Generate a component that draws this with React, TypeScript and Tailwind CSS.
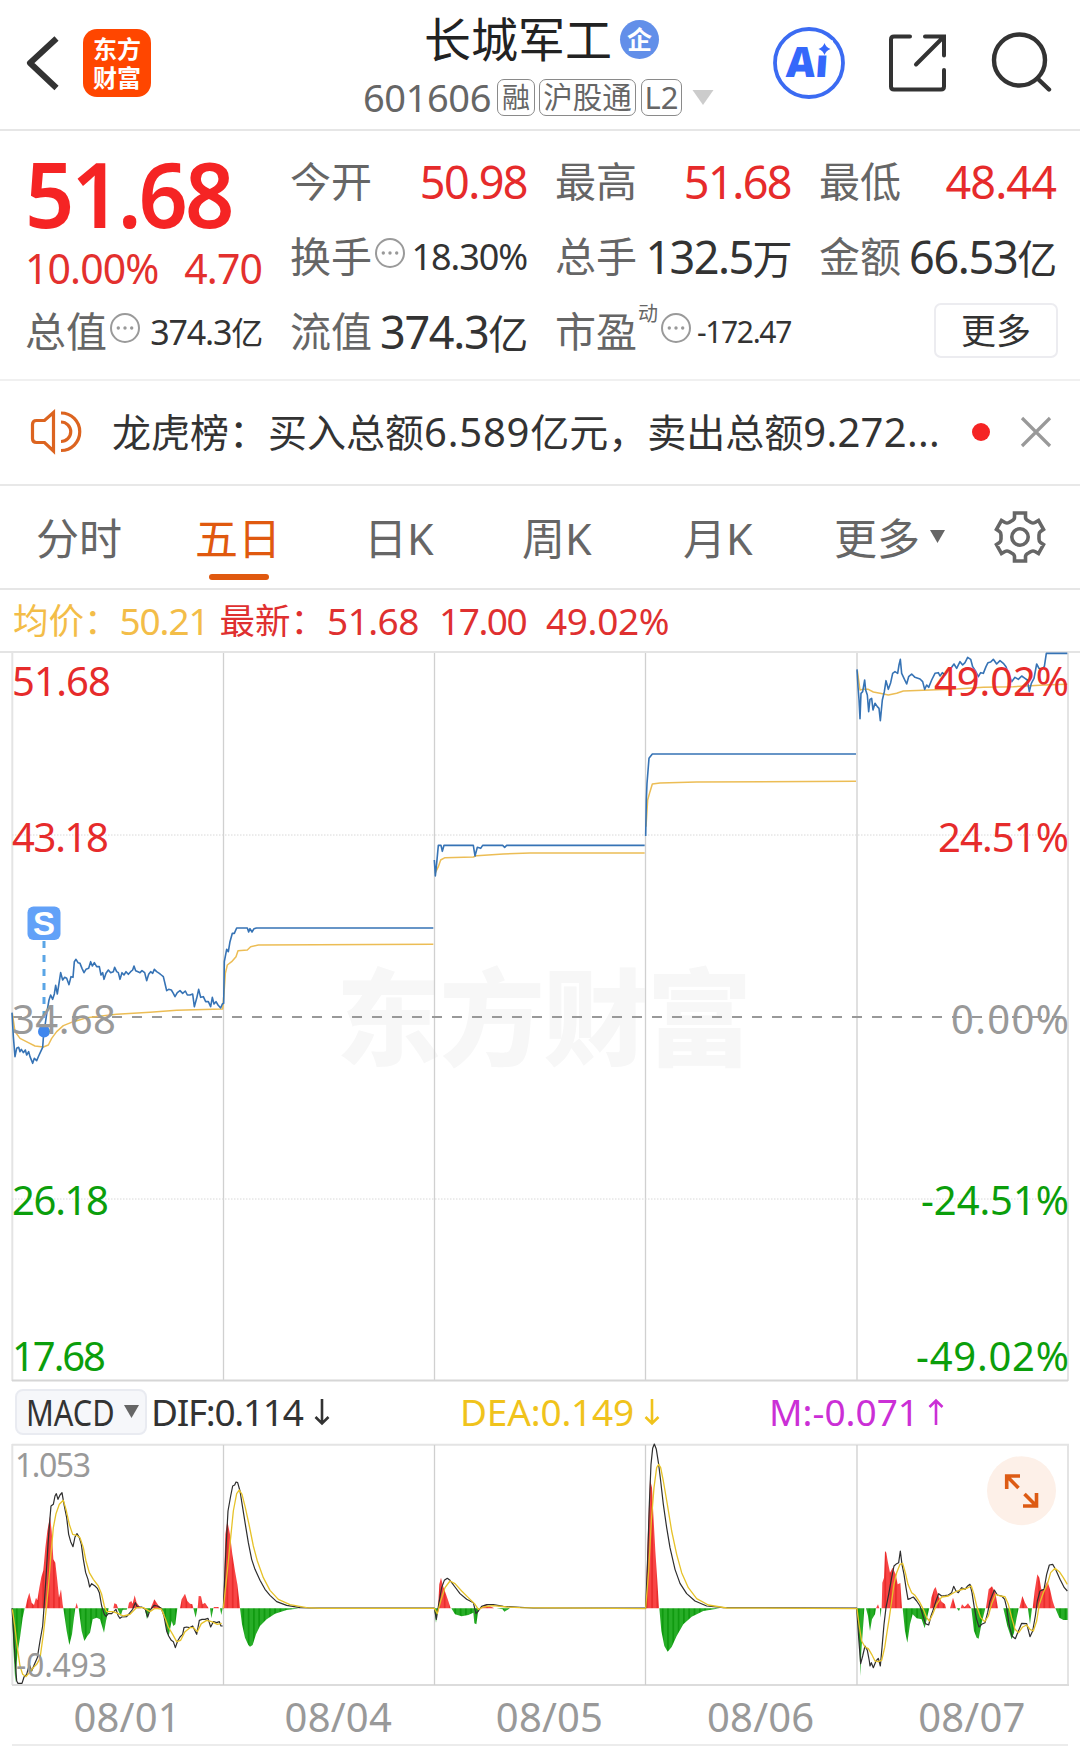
import React from "react";

const FONT = "font-['Noto_Sans','Noto_Sans_CJK_SC',sans-serif]";

type Series = { x: number; y: number; pts: string };

const PRICE: Series[] = [
  {
    x: 0,
    y: 640,
    pts: "36,1118 40,1190 45,1250 50,1225 56,1222 60,1235 64,1228 70,1238 76,1230 80,1245 86,1235 90,1250 95,1262 98,1270 103,1255 110,1262 116,1248 122,1235 128,1222 131,1180 136,1150 141,1115 147,1080 152,1065 158,1078 163,1062 167,1036 172,1062 177,1030 182,998 188,1020 194,1012 200,1015 207,1034 213,1010 219,1012 223,965 228,958 234,968 240,970 246,985 252,998 258,988 266,985 272,965 277,978 283,968 290,980 298,980 303,1005 308,998 312,1018 318,1000 325,990 332,998 340,995 344,982 350,995 355,998 360,1018 366,998 372,1005 378,995 385,1003 392,995 398,990 402,978 407,992 414,995 420,998 426,992 434,998 440,1022 446,1003 452,995 458,1000 463,988 470,995 478,1000 484,1005 490,1010 496,1035 500,1052 506,1048 514,1050 520,1060 525,1070 532,1058 540,1052 548,1060 556,1053 562,1065 570,1065 578,1062 583,1100 590,1075 596,1048 602,1072 610,1070 617,1085 625,1085 632,1100 637,1072 642,1092 648,1085 654,1095 662,1104 667,1092 671,1090 673,965 680,928 685,935 690,905 697,880 703,880 710,864 742,864 746,876 750,866 756,876 762,866 770,864 1300,864",
  },
  {
    x: 420,
    y: 640,
    pts: "43,660 46,708 50,670 55,616 63,616 67,634 72,616 160,616 165,648 172,622 182,625 188,616 248,616 254,622 260,616 674,616",
  },
  { x: 630, y: 640, pts: "47,588 49,480 51,430 57,355 67,342 678,342" },
  {
    x: 630,
    y: 640,
    pts: "681,88 684,140 687,178 690,236 693,160 698,155 704,120 707,150 712,165 716,215 720,178 725,175 729,210 735,190 742,200 747,205 751,242 757,180 763,155 768,122 775,148 782,128 788,100 795,95 803,100 807,75 811,58 815,100 822,115 830,132 836,110 845,102 855,112 870,117 878,125 884,148 890,135 896,142 905,120 915,100 925,98 930,108 937,98 945,105 955,90 965,82 972,72 980,85 990,65 998,75 1005,68 1013,52 1022,58 1028,80 1036,92 1045,110 1052,98 1060,100 1068,80 1074,68 1082,66 1090,58 1100,72 1110,62 1120,70 1128,80 1135,100 1145,125 1155,112 1165,118 1175,108 1185,115 1192,120 1198,155 1204,130 1212,115 1220,72 1227,85 1235,88 1243,80 1249,40 1312,40",
  },
];

const AVERAGE: Series[] = [
  {
    x: 0,
    y: 640,
    pts: "37,1120 45,1175 60,1195 85,1208 105,1218 130,1221 145,1215 155,1195 170,1175 190,1157 220,1145 260,1133 350,1123 450,1117 530,1111 668,1107 672,1060 676,1000 682,975 695,965 708,950 714,932 742,930 752,920 775,915 1300,913",
  },
  { x: 420, y: 640, pts: "45,700 55,680 62,660 75,653 160,651 170,647 250,642 330,639 674,639" },
  { x: 630, y: 640, pts: "48,560 53,480 60,455 67,432 90,429 200,426 678,424" },
  {
    x: 630,
    y: 640,
    pts: "682,92 690,150 700,148 715,148 730,156 750,160 775,165 800,160 820,153 900,150 980,147 1060,142 1150,140 1230,136 1260,134 1312,133",
  },
];

const RISE: Series[] = [
  {
    x: 0,
    y: 1370,
    pts: "76,712 82,685 88,665 95,695 102,702 108,680 112,688 118,650 124,618 130,598 136,530 142,480 150,436 155,480 160,565 166,575 172,630 177,680 183,655 188,700 190,712 226,712 230,695 234,712 340,712 343,697 350,700 354,712 384,712 387,695 394,690 398,698 404,673 410,695 418,706 424,712 452,712 463,685 475,703 484,712 540,712 545,685 555,668 562,690 570,698 577,700 580,712 593,712 596,675 603,676 608,700 615,695 626,712 640,712 642,708 655,708 657,712",
  },
  {
    x: 200,
    y: 1370,
    pts: "70,712 76,490 82,450 90,490 97,550 105,600 112,640 118,690 120,712 714,712 718,640 723,620 730,648 738,670 745,690 752,712 842,712 855,701 880,710 882,712",
  },
  {
    x: 630,
    y: 1370,
    pts: "47,712 54,480 60,325 66,350 70,430 76,540 82,630 87,712 738,712 744,700 748,712 755,712 757,635 762,620 765,540 769,545 773,570 780,605 788,590 797,610 803,640 811,636 816,712 900,712 904,680 912,655 917,648 925,675 935,692 945,700 948,712 960,712 969,680 978,712 992,712 996,700 1004,708 1014,697 1024,712 1068,712 1076,655 1086,646 1096,665 1104,712 1168,712 1177,675 1185,695 1194,712 1208,712 1214,660 1222,610 1228,620 1234,655 1242,655 1252,630 1260,655 1268,690 1275,712",
  },
];

const FALL: Series[] = [
  {
    x: 0,
    y: 1370,
    pts: "36,712 40,830 46,935 52,850 60,800 68,740 74,712 190,712 200,780 208,822 216,790 222,740 226,712 236,712 245,780 253,810 262,795 270,785 278,745 290,740 300,745 306,765 312,785 318,750 326,712 352,712 362,735 368,716 380,716 382,712 434,712 441,745 448,720 452,712 484,712 492,725 500,780 506,795 515,750 520,765 526,760 532,712 580,712 587,740 592,712 630,712 634,742 640,712 660,712 664,732 668,712",
  },
  {
    x: 200,
    y: 1370,
    pts: "120,712 126,760 135,800 145,822 150,827 158,822 168,790 180,765 200,745 225,728 260,717 300,712 703,712 708,755 714,712 754,712 765,730 785,736 805,732 820,725 823,757 829,760 834,725 838,712 890,712 908,715 913,722 930,712",
  },
  {
    x: 630,
    y: 1370,
    pts: "88,712 94,780 103,825 113,842 125,828 140,795 160,760 185,737 220,720 270,712 681,712 685,780 689,840 691,915 694,840 697,800 703,712 708,712 714,735 720,780 726,745 735,730 738,712 750,712 752,740 754,712 818,712 825,780 832,815 840,760 848,730 860,742 875,745 884,772 890,745 898,712 980,712 987,720 990,712 1024,712 1032,780 1040,800 1046,803 1054,760 1066,712 1120,712 1132,765 1145,805 1152,785 1160,740 1166,712 1194,712 1200,760 1206,712 1276,712 1288,740 1300,747 1313,747 1313,712",
  },
];

const DIF: Series[] = [
  {
    x: 0,
    y: 1370,
    pts: "36,712 44,840 50,930 54,937 66,937 72,918 80,910 88,880 95,900 104,878 112,860 120,810 128,765 132,710 138,620 144,520 150,440 153,405 160,400 165,375 169,368 174,385 180,372 186,365 192,400 200,440 206,490 212,512 219,527 225,498 231,488 238,500 244,520 250,565 257,605 264,625 269,648 275,638 285,645 292,652 298,665 305,705 313,730 318,736 325,728 335,728 348,715 355,735 360,742 365,738 380,737 390,725 398,715 406,695 412,708 425,708 436,715 443,738 450,718 462,703 472,705 484,712 492,735 500,780 506,795 514,808 520,812 526,830 533,810 540,798 548,790 552,770 560,768 568,770 578,765 590,790 598,748 606,745 615,745 624,742 632,768 640,752 650,755 658,752 663,765 668,765",
  },
  {
    x: 200,
    y: 1370,
    pts: "70,712 78,530 84,420 92,375 98,345 104,342 108,333 113,335 120,360 128,410 136,460 145,515 155,565 165,595 180,628 195,655 210,673 230,692 260,703 300,710 330,711 703,711 709,745 716,700 725,650 733,628 742,622 750,628 765,648 780,668 800,685 820,695 828,728 835,720 845,706 860,701 880,701 910,706 960,709 1000,711 1337,711",
  },
  {
    x: 630,
    y: 1370,
    pts: "47,712 53,560 58,400 63,280 68,232 73,219 79,235 86,280 92,330 100,400 110,470 120,530 135,595 150,637 170,668 195,690 230,705 280,710 680,711 686,800 692,878 698,855 705,825 712,838 718,870 720,885 724,875 730,890 738,870 745,862 751,885 756,830 762,760 768,710 776,670 785,620 792,585 800,578 806,575 811,540 816,580 822,610 828,650 834,685 842,682 850,678 860,690 870,705 878,730 886,758 896,762 903,735 910,715 918,690 926,668 935,675 945,674 955,672 965,665 971,646 978,660 985,665 995,650 1005,655 1013,645 1020,640 1026,665 1033,710 1040,745 1047,768 1055,760 1065,755 1073,725 1080,690 1093,657 1102,672 1115,675 1124,685 1130,710 1138,765 1146,795 1156,803 1163,785 1175,757 1190,758 1200,797 1208,780 1216,735 1222,690 1230,660 1242,655 1250,610 1258,582 1268,580 1278,598 1290,625 1303,650 1312,660",
  },
];

const DEA: Series[] = [
  {
    x: 0,
    y: 1370,
    pts: "37,715 45,770 52,830 60,885 68,910 78,917 88,905 100,890 110,880 120,862 130,790 138,720 145,650 152,560 160,470 168,428 178,400 190,388 198,415 208,460 218,490 230,493 240,500 250,530 258,570 268,605 280,625 295,645 305,670 313,705 320,722 340,722 355,728 370,735 390,730 410,710 430,710 450,722 465,712 484,714 495,740 505,768 518,790 530,812 542,808 555,782 570,770 580,770 592,782 604,758 620,748 635,752 652,760 665,757",
  },
  {
    x: 200,
    y: 1370,
    pts: "70,712 82,600 90,520 100,420 110,368 118,357 126,370 136,410 148,465 160,525 172,570 190,620 210,658 235,685 270,701 320,710 360,712 703,712 712,728 722,690 735,650 750,630 765,638 785,660 805,680 825,700 835,715 850,708 880,704 920,708 960,710 1337,713",
  },
  {
    x: 630,
    y: 1370,
    pts: "47,712 56,600 64,450 72,350 80,290 86,280 92,290 100,330 112,400 125,480 140,550 155,605 175,650 200,683 235,702 290,711 681,713 687,760 695,810 705,828 715,833 725,850 735,870 745,872 755,868 764,830 770,790 778,740 785,690 792,640 800,605 810,580 818,577 826,605 834,640 845,665 855,673 868,692 880,715 890,740 898,750 908,730 920,700 935,678 955,675 975,663 990,657 1010,652 1024,645 1032,670 1040,705 1052,740 1064,752 1075,735 1086,695 1097,670 1110,675 1125,677 1135,700 1145,740 1155,775 1166,785 1178,768 1190,762 1200,775 1210,780 1220,750 1228,700 1240,665 1252,640 1262,605 1275,592 1288,602 1300,620 1312,640",
  },
];

function Lines({ data, color, width }: { data: Series[]; color: string; width: number }) {
  return (
    <>
      {data.map((s, i) => (
        <polyline
          key={i}
          transform={`translate(${s.x} ${s.y}) scale(0.33333)`}
          points={s.pts}
          fill="none"
          stroke={color}
          strokeWidth={width * 3}
          strokeLinejoin="round"
        />
      ))}
    </>
  );
}

function Areas({ data, fill }: { data: Series[]; fill: string }) {
  return (
    <>
      {data.map((s, i) => (
        <polygon key={i} transform={`translate(${s.x} ${s.y}) scale(0.33333)`} points={s.pts} fill={fill} />
      ))}
    </>
  );
}

function AxisLabel({
  x,
  cy,
  w,
  fill,
  end,
  size = 40,
  children,
}: {
  x: number;
  cy: number;
  w: number;
  fill: string;
  end?: boolean;
  size?: number;
  children: string;
}) {
  return (
    <text
      x={end ? x - w : x}
      y={cy + size * 0.357}
      fontSize={size}
      fill={fill}
      textLength={w}
      lengthAdjust="spacing"
    >
      {children}
    </text>
  );
}

function Hint() {
  return (
    <svg className="h-[32px] w-[32px] shrink-0" viewBox="0 0 32 32">
      <circle cx="16" cy="16" r="14" fill="none" stroke="#9a9a9a" strokeWidth="2" />
      <circle cx="9.3" cy="16" r="1.7" fill="#999" />
      <circle cx="16" cy="16" r="1.7" fill="#999" />
      <circle cx="22.7" cy="16" r="1.7" fill="#999" />
    </svg>
  );
}

function Stat({ label, hint, children }: { label: React.ReactNode; hint?: boolean; children: React.ReactNode }) {
  return (
    <div className="flex items-center justify-between whitespace-nowrap">
      <div className="flex items-center text-[41px] text-[#666]">
        {label}
        {hint && (
          <span className="mb-[8px] ml-[2px] flex">
            <Hint />
          </span>
        )}
      </div>
      {children}
    </div>
  );
}

const BIG = "text-[45px] tracking-[-0.035em]";

function Header() {
  return (
    <header className="flex h-[131px] items-center border-b-2 border-[#e6e6e6] pb-[4px]">
      <svg className="ml-[24px] h-[60px] w-[40px]" viewBox="24 33 40 60">
        <path d="M56.500 38.500L30 63L56.500 88" fill="none" stroke="#333" strokeWidth="6" strokeLinejoin="round" />
      </svg>
      <div className="ml-[19px] flex h-[68px] w-[68px] flex-col items-center justify-center rounded-[14px] bg-[#ff4600] text-[24px] leading-[29px] font-bold text-white">
        <span>东方</span>
        <span>财富</span>
      </div>
      <div className="mt-[11px] ml-[212px] flex w-[352px] flex-col">
        <div className="flex h-[58px] items-center pl-[61px] text-[47px] text-[#222]">
          长城军工
          <span className="ml-[8px] flex h-[39px] w-[39px] items-center justify-center rounded-full bg-[#628fe9] text-[25px] font-bold text-white">
            企
          </span>
        </div>
        <div className="flex h-[58px] items-center text-[#666]">
          <span className="w-[134px] text-[38px] tracking-[-0.4px]">601606</span>
          <span className="flex h-[37px] w-[38px] items-center justify-center rounded-[7px] border-[1.5px] border-[#8a8a8a] text-[28px]">
            融
          </span>
          <span className="ml-[4px] flex h-[37px] w-[97px] items-center justify-center rounded-[7px] border-[1.5px] border-[#8a8a8a] text-[29.500px] whitespace-nowrap">
            沪股通
          </span>
          <span className="ml-[5px] flex h-[37px] w-[41px] items-center justify-center rounded-[7px] border-[1.5px] border-[#8a8a8a] text-[31px]">
            L2
          </span>
          <svg className="ml-[10px] h-[16px] w-[22px]" viewBox="0 0 22 16">
            <path d="M0.500 1h21L11 16z" fill="#ccc" />
          </svg>
        </div>
      </div>
      <svg className="ml-[57px] h-[74px] w-[74px]" viewBox="0 0 74 74">
        <circle cx="37" cy="37" r="34" fill="none" stroke="#3b6bf2" strokeWidth="3.800" />
        <g transform="translate(13.5 50.500) skewX(-4)">
          <text fontSize="42" fontWeight="900" fill="#3568fb" textLength="42" lengthAdjust="spacingAndGlyphs">
            Ai
          </text>
        </g>
        <rect x="43.500" y="14.500" width="17.500" height="15" fill="white" />
        <path d="M52.500 17Q54 21.500 58.500 23Q54 24.500 52.500 29Q51 24.500 46.500 23Q51 21.500 52.500 17z" fill="#3568fb" />
      </svg>
      <svg
        className="ml-[39px] h-[64px] w-[64px]"
        viewBox="884 31 64 64"
        fill="none"
        stroke="#333"
        strokeWidth="4"
        strokeLinecap="round"
      >
        <path d="M909 36.500H893Q890 36.500 890 39.500V86.500Q890 89.500 893 89.500H940Q943 89.500 943 86.500V70M924 36.500H943V55.500M943 36.500L915 64.500" />
      </svg>
      <svg
        className="ml-[39px] h-[64px] w-[64px]"
        viewBox="987 31 64 64"
        fill="none"
        stroke="#333"
        strokeWidth="4.400"
        strokeLinecap="round"
      >
        <circle cx="1018.500" cy="60" r="25.500" />
        <path d="M1036.500 78.500L1048 89.500" />
      </svg>
    </header>
  );
}

function Quote() {
  return (
    <section className="grid h-[250px] grid-cols-[237px_237px_236px_237px] grid-rows-[75px_75px_75px] gap-x-[28px] border-b-2 border-[#f0f0f0] pt-[13px] pl-[25px]">
      <div className="row-span-2 flex flex-col whitespace-nowrap">
        <div className="flex h-[98px] items-center">
          <span className="inline-block origin-left scale-x-[0.96] text-[90px] font-semibold tracking-[-0.035em] text-[#f52424]">
            51.68
          </span>
        </div>
        <div className="flex h-[52px] items-center justify-between text-[41px] tracking-[-0.022em] text-[#e3302e]">
          <span>10.00%</span>
          <span>4.70</span>
        </div>
      </div>
      <Stat label="今开">
        <span className={`${BIG} text-[#e62b2b]`}>50.98</span>
      </Stat>
      <Stat label="最高">
        <span className={`${BIG} text-[#e62b2b]`}>51.68</span>
      </Stat>
      <Stat label="最低">
        <span className="text-[45px] tracking-[-0.02em] text-[#e62b2b]">48.44</span>
      </Stat>
      <Stat label="换手" hint>
        <span className="text-[36px] tracking-[-0.03em] text-[#333]">18.30%</span>
      </Stat>
      <Stat label="总手">
        <span className={`${BIG} text-[#333]`}>
          132.5<span className="text-[40px]">万</span>
        </span>
      </Stat>
      <Stat label="金额">
        <span className="text-[45px] tracking-[-0.03em] text-[#333]">
          66.53<span className="text-[40px]">亿</span>
        </span>
      </Stat>
      <Stat label="总值" hint>
        <span className="text-[34px] tracking-[-0.035em] text-[#333]">
          374.3<span className="text-[32px]">亿</span>
        </span>
      </Stat>
      <Stat label="流值">
        <span className="text-[45px] tracking-[-0.03em] text-[#333]">
          374.3<span className="text-[40px]">亿</span>
        </span>
      </Stat>
      <Stat
        hint
        label={
          <>
            市盈<span className="mb-[36px] ml-[1px] w-[20px] text-[20px]">动</span>
          </>
        }
      >
        <span className="text-[30px] tracking-[-0.045em] text-[#333]">-172.47</span>
      </Stat>
      <div className="flex items-center justify-end">
        <button className="mr-[-2px] mb-[3px] flex h-[55px] w-[124px] items-center justify-center rounded-[7px] border-2 border-[#ececf0] text-[35px] text-[#333]">
          更多
        </button>
      </div>
    </section>
  );
}

function News() {
  return (
    <section className="flex h-[105px] items-center border-b-2 border-[#e8e8e8] pb-[2px] text-[#333]">
      <svg className="ml-[28px] h-[46px] w-[54px]" viewBox="27 409 54 46" fill="none" stroke="#dc6420" strokeWidth="3.200">
        <path d="M52.500 412.500V451L43.500 442.500H35.500Q31.500 442.500 31.500 438.500V424.500Q31.500 420.500 35.500 420.500H43.500Z" />
        <path d="M60 413A18.700 18.700 0 0 1 60 450.500M60 422A9.700 9.700 0 0 1 60 441.500" />
      </svg>
      <span className="ml-[30px] w-[822px] text-[39px] whitespace-nowrap">
        龙虎榜：买入总额<span className="text-[40px] tracking-[0.02em]">6.589</span>亿元，卖出总额
        <span className="text-[40px] tracking-[0.007em]">9.272...</span>
      </span>
      <span className="ml-[38px] h-[18px] w-[18px] rounded-full bg-[#f52424]" />
      <svg className="ml-[30px] h-[32px] w-[32px]" viewBox="0 0 32 32" stroke="#999" strokeWidth="3.200">
        <path d="M2 2L30 30M30 2L2 30" />
      </svg>
    </section>
  );
}

function Tabs() {
  return (
    <nav className="flex h-[104px] items-center border-b-2 border-[#e6e6e6] pt-[3px] text-[43px] whitespace-nowrap text-[#666]">
      <span className="ml-[36px] w-[159px]">分时</span>
      <span className="relative w-[169px] text-[#e0590f]">
        五日
        <span className="absolute bottom-[-20px] left-[14px] h-[6.500px] w-[60px] rounded-full bg-[#e0590f]" />
      </span>
      <span className="w-[158px]">日K</span>
      <span className="w-[161px]">周K</span>
      <span className="w-[151px]">月K</span>
      <span>更多</span>
      <svg className="mb-[5px] ml-[10px] h-[13px] w-[15px]" viewBox="0 0 15 13">
        <path d="M0 0h15L7.500 13z" fill="#666" />
      </svg>
      <svg className="mb-[4px] ml-[47px] h-[56px] w-[56px]" viewBox="-28 -28 56 56" fill="none" stroke="#666" strokeWidth="3.600">
        <path d="M-5.500 -24H5.500V-19.500Q5.500 -17.500 8.500 -16L11 -14.500Q13 -13.500 15 -14.500L18.500 -16.500L23.500 -7.500L20.500 -5.500Q19 -4.500 19 -2V2Q19 4.500 20.500 5.500L23.500 7.500L18.500 16.500L15 14.500Q13 13.500 11 14.500L8.500 16Q5.500 17.500 5.500 19.500V24H-5.500V19.500Q-5.500 17.500 -8.500 16L-11 14.500Q-13 13.500 -15 14.500L-18.500 16.500L-23.500 7.500L-20.500 5.500Q-19 4.500 -19 2V-2Q-19 -4.500 -20.500 -5.500L-23.500 -7.500L-18.500 -16.500L-15 -14.500Q-13 -13.500 -11 -14.500L-8.500 -16Q-5.500 -17.500 -5.500 -19.500Z" />
        <circle r="8.200" />
      </svg>
    </nav>
  );
}

function Summary() {
  return (
    <div className="flex h-[61px] items-center text-[35.500px] whitespace-nowrap">
      <div className="ml-[13px] flex items-center text-[#f3bd48]">
        均价：<span className="w-[100px] text-[37px] tracking-[-0.03em]">50.21</span>
      </div>
      <div className="flex items-center text-[#df3030]">
        最新：
        <span className="w-[113px] pl-[1px] text-[37px] tracking-[-0.015em]">51.68</span>
        <span className="w-[107px] text-[37px] tracking-[-0.04em]">17.00</span>
        <span className="text-[37px] tracking-[-0.01em]">49.02%</span>
      </div>
    </div>
  );
}

const RED = "#e62b2b";
const GREEN = "#0b9e0b";
const GRAY = "#999";

function PriceChart() {
  return (
    <svg className="block h-[732px] w-[1080px]" viewBox="0 651 1080 732">
      <text x="336" y="1057" fontSize="105" fontWeight="900" fill="#f7f7f7" textLength="416">
        东方财富
      </text>
      <g stroke="#d0d0d0" strokeWidth="1.300">
        <path d="M223.500 652V1381M434.500 652V1381M645.500 652V1381M857 652V1381" />
      </g>
      <path d="M0 652H1080M12.300 652V1381M1068 652V1381" stroke="#e4e4e4" strokeWidth="2" />
      <path d="M12 1380.500H1068" stroke="#d6d6d6" strokeWidth="2" />
      <path d="M12 835H1068M12 1199H1068" stroke="#d8d8d8" strokeWidth="1" strokeDasharray="1.500 1.500" />
      <path d="M12 1017H1062" stroke="#999" strokeWidth="2" strokeDasharray="10 10" />
      <Lines data={AVERAGE} color="#ecbd55" width={1.5} />
      <Lines data={PRICE} color="#3673b5" width={1.6} />
      <path d="M44 941V1030" stroke="#5aa5e6" strokeWidth="3" strokeDasharray="7 7" />
      <circle cx="44" cy="1031.500" r="6" fill="#3f87ee" />
      <rect x="27.500" y="906.500" width="33" height="33.500" rx="6" fill="#62a1f8" />
      <text x="44" y="935" fontSize="33" fontWeight="700" fill="white" textAnchor="middle" className="font-['Liberation_Sans']">
        S
      </text>
      <AxisLabel x={12} cy={682} w={99} fill={RED}>51.68</AxisLabel>
      <AxisLabel x={12} cy={838} w={97} fill={RED}>43.18</AxisLabel>
      <AxisLabel x={12} cy={1020} w={104} fill={GRAY}>34.68</AxisLabel>
      <AxisLabel x={12} cy={1201} w={97} fill={GREEN}>26.18</AxisLabel>
      <AxisLabel x={12} cy={1357} w={94} fill={GREEN}>17.68</AxisLabel>
      <AxisLabel end x={1069} cy={682} w={135} fill={RED}>49.02%</AxisLabel>
      <AxisLabel end x={1069} cy={838} w={131} fill={RED}>24.51%</AxisLabel>
      <AxisLabel end x={1069} cy={1020} w={118} fill={GRAY}>0.00%</AxisLabel>
      <AxisLabel end x={1069} cy={1201} w={148} fill={GREEN}>-24.51%</AxisLabel>
      <AxisLabel end x={1069} cy={1357} w={153} fill={GREEN}>-49.02%</AxisLabel>
    </svg>
  );
}

function Arrow({ up }: { up?: boolean }) {
  return (
    <svg className="h-[28px] w-[16px]" viewBox="0 0 16 28" fill="none" stroke="currentColor" strokeWidth="2.600">
      {up ? <path d="M8 27V3M1.500 9L8 2.500L14.500 9" /> : <path d="M8 1V25M1.500 19L8 25.500L14.500 19" />}
    </svg>
  );
}

function MacdBar() {
  return (
    <div className="flex h-[60px] items-center pb-[3px] text-[37px] whitespace-nowrap text-[#333]">
      <div className="ml-[15px] flex h-[46px] w-[132px] items-center rounded-[8px] border-2 border-[#e9ebf1] bg-[#f6f7fa] pl-[9px]">
        <span className="w-[98px]">
          <span className="inline-block origin-left scale-x-[0.83]">MACD</span>
        </span>
        <svg className="h-[13px] w-[15px] shrink-0" viewBox="0 0 15 13">
          <path d="M0 0h15L7.500 13z" fill="#666" />
        </svg>
      </div>
      <div className="ml-[4px] flex w-[309px] items-center">
        <span className="w-[163px] tracking-[-0.035em]">DIF:0.114</span>
        <Arrow />
      </div>
      <div className="flex w-[309px] items-center text-[#f0c31c]">
        <span className="w-[184px] tracking-[-0.005em]">DEA:0.149</span>
        <Arrow />
      </div>
      <div className="flex items-center text-[#cb2fd6]">
        <span className="w-[159px]">M:-0.071</span>
        <Arrow up />
      </div>
    </div>
  );
}

function MacdChart() {
  return (
    <svg className="block h-[244px] w-[1080px]" viewBox="0 1442 1080 244">
      <defs>
        <pattern id="fallBars" width="5.300" height="8" patternUnits="userSpaceOnUse" patternTransform="scale(3)">
          <rect width="5.300" height="8" fill="#27ad27" />
          <rect width="1.800" height="8" fill="#109a10" />
        </pattern>
        <pattern id="riseBars" width="5.300" height="8" patternUnits="userSpaceOnUse" patternTransform="scale(3)">
          <rect width="5.300" height="8" fill="#f84545" />
          <rect width="1.800" height="8" fill="#ea2d2d" />
        </pattern>
      </defs>
      <path d="M12 1443.700H1069M12.300 1443V1684M1068 1443V1684" stroke="#e4e4e4" strokeWidth="2" />
      <path d="M12 1684H1069" stroke="#dcdcdc" strokeWidth="2" />
      <path d="M223.500 1444V1684M434.500 1444V1684M645.500 1444V1684M857 1444V1684" stroke="#cfcfcf" strokeWidth="1.300" />
      <Areas data={RISE} fill="url(#riseBars)" />
      <Areas data={FALL} fill="url(#fallBars)" />
      <Lines data={DIF} color="#2e2e2e" width={1.2} />
      <Lines data={DEA} color="#e6c229" width={1.3} />
      <AxisLabel x={15} cy={1465} w={76} size={32} fill={GRAY}>1.053</AxisLabel>
      <AxisLabel x={16} cy={1665} w={91} size={32} fill={GRAY}>-0.493</AxisLabel>
      <circle cx="1021.500" cy="1489.700" r="34.500" fill="#fdf0e8" />
      <path
        d="M1006.700 1488V1475H1020M1007 1475.300L1018.500 1487M1036.500 1492V1505H1023M1036.200 1504.700L1024.500 1493"
        fill="none"
        stroke="#dd5b14"
        strokeWidth="3.600"
      />
    </svg>
  );
}

function Dates() {
  return (
    <div className="mx-[12px] flex h-[59px] items-center border-b-2 border-[#ececec] pt-[2px] text-[40px] text-[#999]">
      {["08/01", "08/04", "08/05", "08/06", "08/07"].map((d) => (
        <span key={d} className="flex-1 pl-[19px] text-center tracking-[0.2px]">
          {d}
        </span>
      ))}
    </div>
  );
}

export default function App() {
  return (
    <main lang="zh-CN" className={`h-[1752px] w-[1080px] overflow-hidden bg-white leading-none ${FONT}`}>
      <Header />
      <Quote />
      <News />
      <Tabs />
      <Summary />
      <PriceChart />
      <MacdBar />
      <MacdChart />
      <Dates />
    </main>
  );
}
